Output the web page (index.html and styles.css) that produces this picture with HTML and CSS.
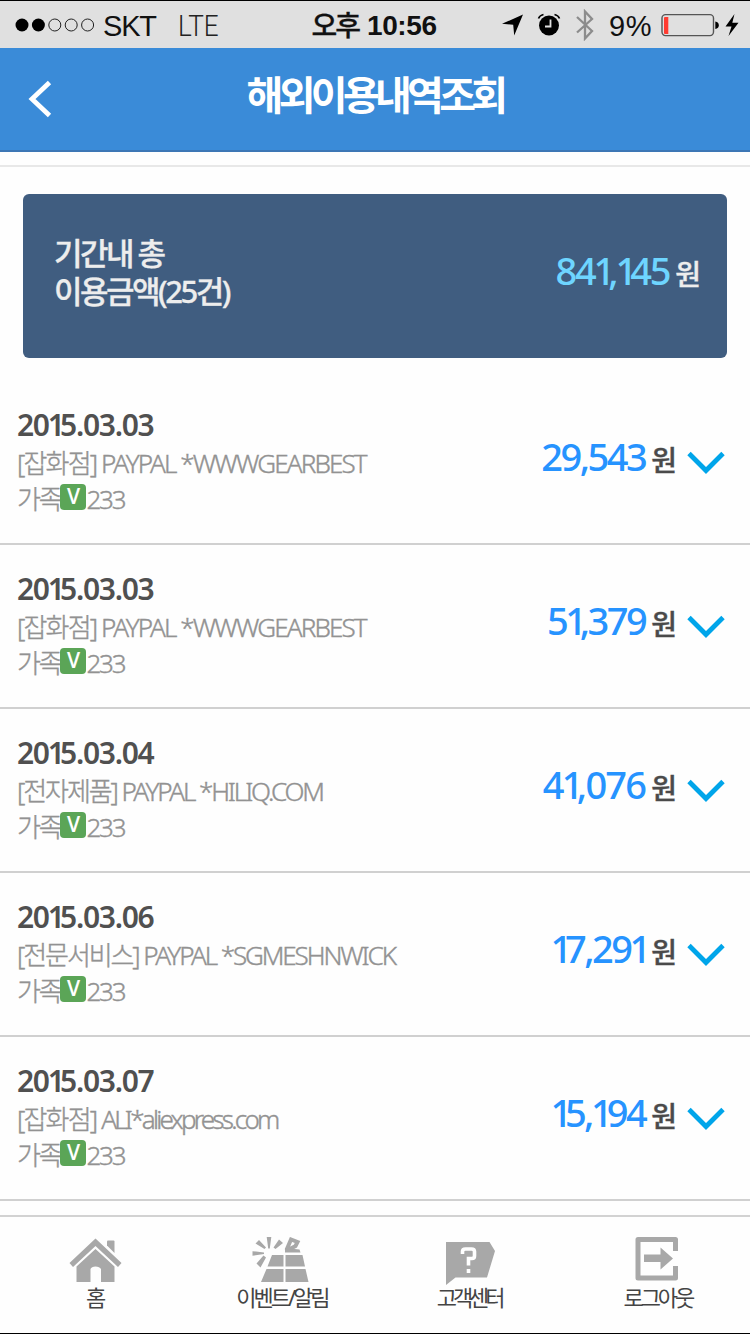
FILE: index.html
```html
<!DOCTYPE html>
<html lang="ko">
<head>
<meta charset="utf-8">
<title>해외이용내역조회</title>
<link rel="stylesheet" href="styles.css">
</head>
<body>
<div class="screen">
  <div class="status">
    <div class="status-left">
      <svg class="signal" width="82" height="18" viewBox="0 0 82 18"><circle cx="8" cy="9" r="6.5"/><circle cx="24.4" cy="9" r="6.5"/><g fill="none" stroke="#222" stroke-width="1"><circle cx="40.8" cy="9" r="6"/><circle cx="57.2" cy="9" r="6"/><circle cx="73.6" cy="9" r="6"/></g></svg>
      <span class="carrier">SKT</span><span class="network">LTE</span>
    </div>
    <div class="clock"><span class="ampm">오후</span><span>10:56</span></div>
    <div class="status-right">
      <svg class="locate" width="22" height="22" viewBox="0 0 22 22"><path d="M21 0.500L12.200 21.500L11.200 10.800L0 9.800Z"/></svg>
      <svg class="alarm" width="24" height="24" viewBox="0 0 24 24"><circle cx="12" cy="12.500" r="10"/><path d="M1.500 5.500Q2.500 2.500 6.500 1.500M22.500 5.500Q21.500 2.500 17.500 1.500" fill="none" stroke="#000" stroke-width="1.600"/><path d="M13.500 6.500V13.500H8" fill="none" stroke="#e0e0e0" stroke-width="1.800"/></svg>
      <svg class="bluetooth" width="20" height="32" viewBox="0 0 20 32"><path d="M2 8L17 22L10 29.500V2.500L17 10L2 23.500" fill="none" stroke="#8c8c8c" stroke-width="2.300"/></svg>
      <span class="percent">9%</span>
      <svg class="battery" width="58" height="24" viewBox="0 0 58 24"><rect x="1" y="1.600" width="51.500" height="21" rx="3.500" fill="none" stroke="#555" stroke-width="1.400"/><path d="M4 4H7.300V21H4Q3 21 3 20V5Q3 4 4 4Z" fill="#ff3b30"/><path d="M54.300 8.500Q57.800 9 57.800 12.300Q57.800 15.600 54.300 16Z"/></svg>
      <svg class="bolt" width="14" height="22" viewBox="0 0 14 22"><path d="M9.500 0L0.500 12.500H6.500L3.500 22L13.500 8.800H7.300Z"/></svg>
    </div>
  </div>
  <header class="header">
    <svg class="back" width="24" height="38" viewBox="0 0 24 38"><path d="M21.500 2.500L4 19L21.500 35.500" fill="none" stroke="#fff" stroke-width="4.800"/></svg>
    <h1 class="title">해외이용내역조회</h1>
  </header>
  <main class="content">
    <section class="summary">
      <div class="summary-label"><div>기간내 총</div><div>이용금액(25건)</div></div>
      <div class="amount amount-total"><span class="num">84<i>1</i>,<i>1</i>45</span><span class="won">원</span></div>
    </section>
    <ul class="list">
      <li class="row">
        <div class="info"><div class="date">20<i>1</i>5.03.03</div><div class="desc">[잡화점] PAYPAL *WWWGEARBEST</div><div class="card-name">가족<b class="badge">V</b>233</div></div>
        <div class="amount"><span class="num">29,543</span><span class="won">원</span></div>
        <svg class="chevron" width="38" height="24" viewBox="0 0 38 24"><path d="M2 2.500L19 19.500L36 2.500" fill="none" stroke="#00a5ea" stroke-width="4.800"/></svg>
      </li>
      <li class="row">
        <div class="info"><div class="date">20<i>1</i>5.03.03</div><div class="desc">[잡화점] PAYPAL *WWWGEARBEST</div><div class="card-name">가족<b class="badge">V</b>233</div></div>
        <div class="amount"><span class="num">5<i>1</i>,379</span><span class="won">원</span></div>
        <svg class="chevron" width="38" height="24" viewBox="0 0 38 24"><path d="M2 2.500L19 19.500L36 2.500" fill="none" stroke="#00a5ea" stroke-width="4.800"/></svg>
      </li>
      <li class="row">
        <div class="info"><div class="date">20<i>1</i>5.03.04</div><div class="desc narrow">[전자제품] PAYPAL *HILIQ.COM</div><div class="card-name">가족<b class="badge">V</b>233</div></div>
        <div class="amount"><span class="num wide">4<i>1</i>,076</span><span class="won">원</span></div>
        <svg class="chevron" width="38" height="24" viewBox="0 0 38 24"><path d="M2 2.500L19 19.500L36 2.500" fill="none" stroke="#00a5ea" stroke-width="4.800"/></svg>
      </li>
      <li class="row">
        <div class="info"><div class="date">20<i>1</i>5.03.06</div><div class="desc narrow">[전문서비스] PAYPAL *SGMESHNWICK</div><div class="card-name">가족<b class="badge">V</b>233</div></div>
        <div class="amount"><span class="num"><i>1</i>7,29<i>1</i></span><span class="won">원</span></div>
        <svg class="chevron" width="38" height="24" viewBox="0 0 38 24"><path d="M2 2.500L19 19.500L36 2.500" fill="none" stroke="#00a5ea" stroke-width="4.800"/></svg>
      </li>
      <li class="row">
        <div class="info"><div class="date">20<i>1</i>5.03.07</div><div class="desc">[잡화점] <span class="tight">ALI*aliexpress.com</span></div><div class="card-name">가족<b class="badge">V</b>233</div></div>
        <div class="amount"><span class="num"><i>1</i>5,<i>1</i>94</span><span class="won">원</span></div>
        <svg class="chevron" width="38" height="24" viewBox="0 0 38 24"><path d="M2 2.500L19 19.500L36 2.500" fill="none" stroke="#00a5ea" stroke-width="4.800"/></svg>
      </li>
    </ul>
  </main>
  <nav class="tabs">
    <a class="tab">
      <svg width="60" height="48" viewBox="0 0 60 48"><g fill="#a8a8a8"><path d="M30.500 1.500L56.500 26L53 30L30.500 9L8 30L4.500 26Z"/><path d="M42 4.500Q42 3.500 43 3.500H48.500Q49.500 3.500 49.500 4.500V16L42 8.500Z"/><path d="M30.500 12L49.500 29.500V45H36V32Q34.500 29.500 30.500 29.500Q26.500 29.500 25.500 32V45H11.500V29.500Z"/></g></svg>
      <span>홈</span>
    </a>
    <a class="tab">
      <svg width="60" height="48" viewBox="0 0 60 48"><g fill="#a8a8a8"><path d="M20 18H31.500V29.500H15.500ZM33.500 18H50.500L53 29.500H33.500ZM14.500 32H31.500V45H9ZM33.500 32H53.500L56.500 45H33.500Z"/><path d="M0.500 14.200L12 15.500V17L0.500 18.800ZM3.500 6.500L7 3L14 10.500L12.500 12ZM14.700 0H19.300L17.800 11.500H16.200ZM21.500 10.500L27 2.500L31 6L23.500 12ZM4.500 26.500L11.500 18.500L14 20.500L8.500 30.500Z"/><path d="M33 11L47.500 12.500L48.500 15.500H33Z"/></g><path d="M34.500 13L39 2.500L45.500 5L43.500 9L37 12.500" fill="none" stroke="#a8a8a8" stroke-width="4"/></svg>
      <span>이벤트/알림</span>
    </a>
    <a class="tab">
      <svg width="60" height="48" viewBox="0 0 60 48"><path d="M7 5H50.500L56 14L48 40.500H16.500L7 48Z" fill="#a8a8a8"/><path d="M23.500 17V14.500Q23.500 12 26.500 12H32.500Q35.500 12 35.500 14.500V19Q35.500 21.500 33 21.500H29.500V28.500M29.500 32V36" fill="none" stroke="#fff" stroke-width="3.600"/></svg>
      <span class="help">고객센터</span>
    </a>
    <a class="tab">
      <svg width="60" height="48" viewBox="0 0 60 48"><path d="M49.500 14V2.500H12V41H49.500V29" fill="none" stroke="#a8a8a8" stroke-width="5" stroke-linejoin="round"/><path d="M18 17.500H34.500V10.500L47 21.500L34.500 32.500V25H18Z" fill="#a8a8a8"/></svg>
      <span class="logout">로그아웃</span>
    </a>
  </nav>
</div>
</body>
</html>
```
FILE: styles.css
```css
* { box-sizing: border-box; }
body { margin: 0; background: #fefefe; font-family: "Noto Sans", "Noto Sans CJK KR", sans-serif; }
svg { display: block; flex: none; }
.screen { width: 750px; height: 1334px; display: flex; flex-direction: column; border-top: 1px solid #000; border-bottom: 1px solid #000; overflow: hidden; white-space: nowrap; }

.status { height: 47px; flex: none; background: #e0e0e0; display: grid; grid-template-columns: 1fr auto 1fr; align-items: center; padding: 1px 11px 0 14px; font-family: "Liberation Sans", "Noto Sans CJK KR", sans-serif; font-size: 29px; line-height: 34px; color: #111; }
.status-left, .status-right { display: flex; align-items: center; }
.status-right { justify-content: flex-end; }
.carrier { margin-left: 7px; letter-spacing: -1.2px; padding-top: 2px; }
.network { margin-left: 22px; padding-top: 2px; font-family: Roboto, sans-serif; font-weight: 300; transform: scaleX(.9); transform-origin: left; color: #222; }
.clock { display: flex; font-weight: 700; font-size: 28px; letter-spacing: -.4px; gap: 8px; padding: 2px 5px 0 0; }
.ampm { font-weight: 500; letter-spacing: -2px; padding-top: 1px; -webkit-text-stroke: .3px #111; }
.alarm { margin-left: 13px; }
.bluetooth { margin-left: 14px; }
.percent { margin-left: 14px; letter-spacing: .5px; padding-top: 2px; }
.battery { margin-left: 9px; }
.bolt { margin-left: 6px; }

.header { height: 104px; flex: none; background: #3a8bd8; border-bottom: 2px solid #3d77b5; display: grid; grid-template-columns: 60px 1fr 60px; align-items: center; }
.back { margin-left: 28px; }
.title { margin: 0; text-align: center; color: #fff; font-weight: 700; font-size: 40px; line-height: 60px; letter-spacing: -4.700px; padding-bottom: 8px; }

.content { flex: none; margin-top: 13px; border-top: 2px solid #e8e8e8; height: 1050px; padding-top: 27px; }
.summary { margin: 0 23px 23px; height: 164px; border-radius: 6px; background: #405d80; display: flex; justify-content: space-between; align-items: center; padding: 0 26px 8px 31px; }
.summary-label { color: #ededed; font-weight: 500; font-size: 31px; line-height: 38px; letter-spacing: -2.5px; -webkit-text-stroke: .3px #ededed; }
.amount { display: flex; align-items: baseline; line-height: 50px; }
.num { color: #2693ff; font-size: 38px; font-weight: 500; letter-spacing: -2.500px; }
.num i, .date i { font-style: normal; margin: 0 -4.800px 0 -1px; }
.date i { margin: 0 -3.500px 0 -1px; }
.num.wide { letter-spacing: -1.800px; }
.won { color: #4a4a4a; font-size: 28px; font-weight: 500; margin-left: 6px; -webkit-text-stroke: .4px #4a4a4a; }
.num i:last-child { margin-right: -3.500px; }
.amount-total .num { color: #6ed5ff; letter-spacing: -2.200px; }
.amount-total .num i { margin-right: -4.800px; }
.amount-total .won { color: #ededed; -webkit-text-stroke-color: #ededed; }

.list { list-style: none; margin: 0; padding: 0; }
.row { height: 164px; border-bottom: 2px solid #d0d0d0; display: flex; padding: 24px 25px 0 17px; }
.info { flex: 1; }
.date { color: #505050; font-size: 30px; font-weight: 600; line-height: 40px; letter-spacing: -1.300px; }
.desc, .card-name { color: #929292; font-size: 26px; font-weight: 300; line-height: 37px; letter-spacing: -1.850px; -webkit-text-stroke: .4px #929292; }
.desc.narrow { letter-spacing: -2.100px; }
.tight { letter-spacing: -2.750px; }
.card-name { display: flex; align-items: center; line-height: 34px; letter-spacing: -2.200px; }
.badge { width: 26px; height: 26px; margin: -4px 0 0 0; border-radius: 4px; background: #5ba557; color: #fff; font: 600 21px/25px "Open Sans", sans-serif; letter-spacing: 0; text-align: center; -webkit-text-stroke: 0; }
.row .amount { height: 50px; margin-top: 26px; }
.num i:only-child { margin-right: -4.800px; }
.chevron { margin: 46px 0 0 10px; }

.tabs { height: 118px; flex: none; border-top: 2px solid #d2d2d2; display: grid; grid-template-columns: repeat(4, 1fr); padding: 20px 0 0 1px; }
.tab { display: flex; flex-direction: column; align-items: center; color: #444; font-size: 22px; font-weight: 400; letter-spacing: -3px; line-height: 24px; }
.help { letter-spacing: -4px; }
.logout { padding-left: 3px; }
```
